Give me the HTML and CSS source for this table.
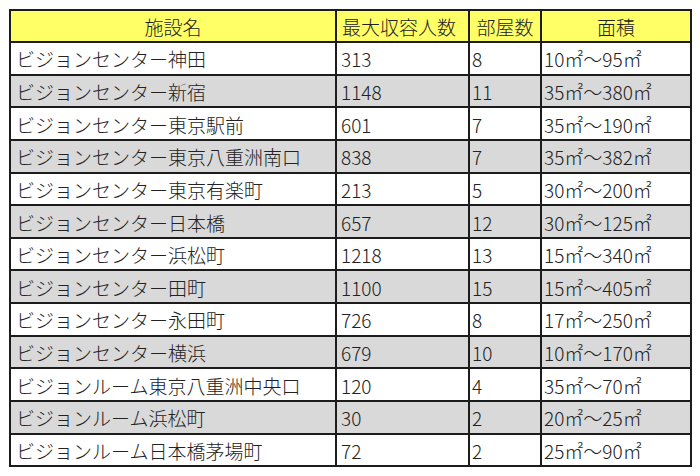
FILE: index.html
```html
<!DOCTYPE html>
<html lang="ja">
<head>
<meta charset="utf-8">
<link rel="stylesheet" href="styles.css">
</head>
<body>
<div class="wrap">
<table class="facilities">
<colgroup>
<col class="c-name"><col class="c-cap"><col class="c-rooms"><col class="c-area">
</colgroup>
<thead>
<tr><th class="center">施設名</th><th class="left">最大収容人数</th><th class="center">部屋数</th><th class="center">面積</th></tr>
</thead>
<tbody>
<tr><td>ビジョンセンター神田</td><td>313</td><td>8</td><td>10㎡～95㎡</td></tr>
<tr class="alt"><td>ビジョンセンター新宿</td><td>1148</td><td>11</td><td>35㎡～380㎡</td></tr>
<tr><td>ビジョンセンター東京駅前</td><td>601</td><td>7</td><td>35㎡～190㎡</td></tr>
<tr class="alt"><td>ビジョンセンター東京八重洲南口</td><td>838</td><td>7</td><td>35㎡～382㎡</td></tr>
<tr><td>ビジョンセンター東京有楽町</td><td>213</td><td>5</td><td>30㎡～200㎡</td></tr>
<tr class="alt"><td>ビジョンセンター日本橋</td><td>657</td><td>12</td><td>30㎡～125㎡</td></tr>
<tr><td>ビジョンセンター浜松町</td><td>1218</td><td>13</td><td>15㎡～340㎡</td></tr>
<tr class="alt"><td>ビジョンセンター田町</td><td>1100</td><td>15</td><td>15㎡～405㎡</td></tr>
<tr><td>ビジョンセンター永田町</td><td>726</td><td>8</td><td>17㎡～250㎡</td></tr>
<tr class="alt"><td>ビジョンセンター横浜</td><td>679</td><td>10</td><td>10㎡～170㎡</td></tr>
<tr><td>ビジョンルーム東京八重洲中央口</td><td>120</td><td>4</td><td>35㎡～70㎡</td></tr>
<tr class="alt"><td>ビジョンルーム浜松町</td><td>30</td><td>2</td><td>20㎡～25㎡</td></tr>
<tr><td>ビジョンルーム日本橋茅場町</td><td>72</td><td>2</td><td>25㎡～90㎡</td></tr>
</tbody>
</table>
</div>
</body>
</html>
```
FILE: styles.css
```css
html, body {
  margin: 0;
  padding: 0;
  background: #ffffff;
}
.wrap {
  padding: 9px 0 0 9px;
}
.facilities {
  border-collapse: collapse;
  table-layout: fixed;
  width: 681px;
  font-family: "Noto Sans CJK JP", "Noto Sans", sans-serif;
  font-size: 19px;
  color: #222222;
}
.c-name { width: 326px; }
.c-cap { width: 133px; }
.c-rooms { width: 72px; }
.c-area { width: 150px; }
.facilities th,
.facilities td {
  border: 2px solid #1c1c1c;
  padding: 2px 0 0 4px;
  white-space: nowrap;
  overflow: hidden;
  text-align: left;
  font-weight: 300;
  line-height: 24px;
}
.facilities th {
  background: #ffff66;
  height: 28px;
}
.facilities td {
  height: 28.65px;
}
.facilities th.center {
  text-align: center;
  padding: 2px 0 0 0;
}
.facilities th.left {
  padding-left: 5px;
}
.facilities tr.alt td {
  background: #d9d9d9;
}
.facilities td:first-child {
  padding-left: 5px;
}
.facilities td:nth-child(3),
.facilities td:nth-child(4) {
  padding-left: 2px;
}
```
